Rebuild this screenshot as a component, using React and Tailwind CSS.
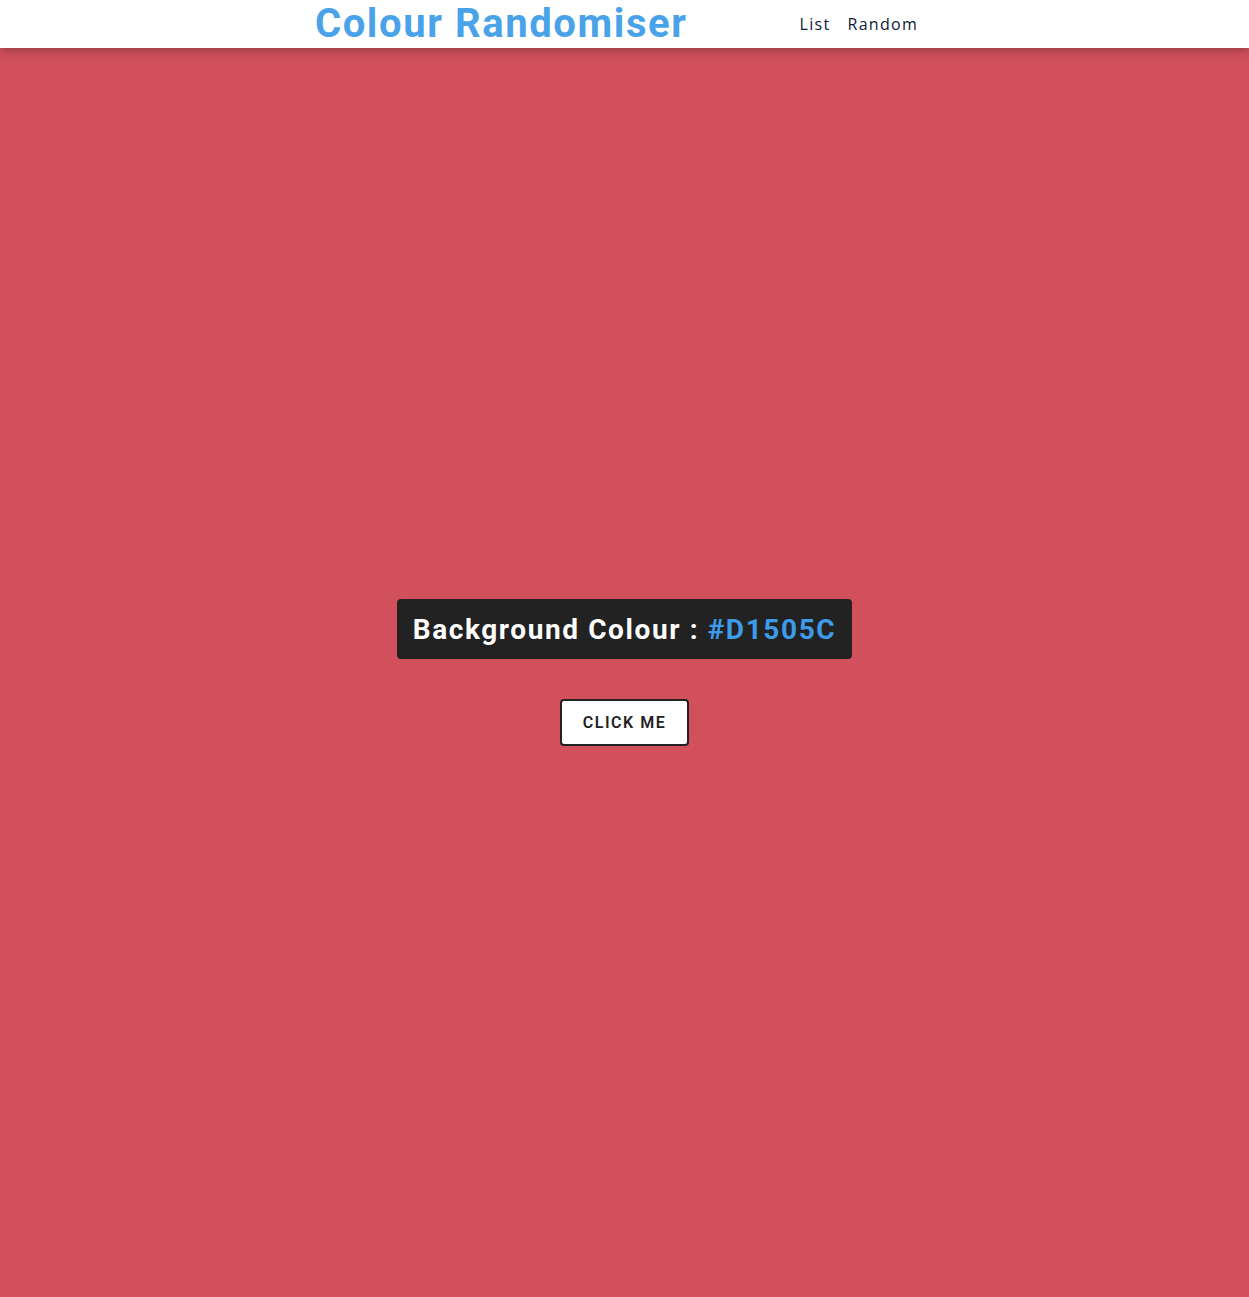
import React, { useState } from 'react';

const colours = ['#D1505C', '#3FA796', '#6C5CE7', '#E1A23C', '#2D9CDB'];

export default function App() {
  const [idx, setIdx] = useState(0);
  const colour = colours[idx];

  return (
    <div className="flex min-h-screen flex-col font-['Roboto',sans-serif]" style={{ backgroundColor: colour }}>
      <header className="relative z-10 flex h-12 items-center justify-center bg-white pr-4 shadow-[0_2px_10px_rgba(0,0,0,0.3)]">
        <h1 className="text-[40px] font-bold leading-none tracking-[1.6px] text-[#4aa3e8]">Colour Randomiser</h1>
        <nav className="ml-[112px] flex gap-[17px] font-['Open_Sans',sans-serif] text-[16px] font-medium tracking-[1.3px] text-[#0a2038]">
          <a href="#">List</a>
          <a href="#">Random</a>
        </nav>
      </header>

      <main className="flex flex-1 flex-col items-center justify-center gap-10">
        <div className="rounded bg-[#222222] px-4 pt-[10px] pb-[8px] text-[28px] font-bold tracking-[1.6px] text-white">
          Background Colour : <span className="text-[#3d9be9]">{colour}</span>
        </div>
        <button
          type="button"
          onClick={() => setIdx((i) => (i + 1) % colours.length)}
          className="h-[47px] w-[129px] rounded border-2 border-[#222222] bg-white text-[16px] font-semibold tracking-[1.5px] text-[#222222]"
        >
          CLICK ME
        </button>
      </main>
    </div>
  );
}
